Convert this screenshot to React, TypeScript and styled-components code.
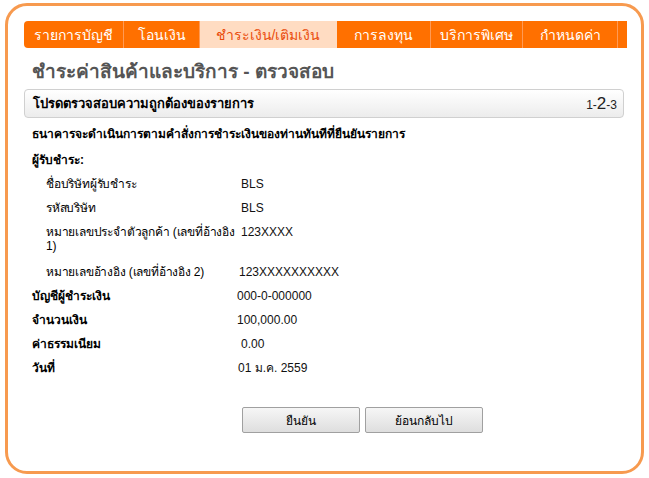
import { Fragment } from "react";
import styled, { createGlobalStyle } from "styled-components";

const GlobalStyle = createGlobalStyle`
  html, body {
    margin: 0;
    padding: 0;
    background: #ffffff;
    font-family: Tahoma, "Liberation Sans", "Noto Sans", sans-serif;
    color: #000;
  }
`;

const Page = styled.div`
  width: 649px;
  height: 478px;
  padding: 3px 5px 4px 5px;
  box-sizing: border-box;
`;

const Frame = styled.div`
  height: 100%;
  box-sizing: border-box;
  border: 3px solid #f79a4f;
  border-radius: 22px;
  padding: 15px 13px 0 16px;
  display: flex;
  flex-direction: column;
`;

const Nav = styled.div`
  display: flex;
  height: 27px;
  background: #ff7000;
  border-radius: 4px 0 0 4px;
  width: 603px;
`;

const Tab = styled.div<{ $w: number; $active?: boolean }>`
  width: ${(p) => p.$w}px;
  display: flex;
  align-items: center;
  justify-content: center;
  font-size: 14px;
  color: ${(p) => (p.$active ? "#ea4c0c" : "#ffffff")};
  background: ${(p) => (p.$active ? "#ffdcc2" : "transparent")};
  border-right: 1px solid ${(p) => (p.$active ? "transparent" : "#ff9a55")};
  box-sizing: border-box;
`;

const Title = styled.h1`
  margin: 12px 0 0 8px;
  font-size: 19px;
  font-weight: bold;
  color: #555555;
  line-height: 24px;
`;

const StepBox = styled.div`
  margin-top: 5px;
  width: 600px;
  height: 29px;
  box-sizing: border-box;
  border: 1px solid #d0d0d0;
  border-radius: 4px;
  background: linear-gradient(#ffffff, #ececec);
  display: flex;
  align-items: center;
  justify-content: space-between;
  padding: 0 6px 0 8px;
`;

const StepTitle = styled.span`
  font-size: 13px;
  font-weight: bold;
`;

const Steps = styled.span`
  font-size: 12px;
  color: #222;
  b {
    font-weight: normal;
    font-size: 17px;
  }
`;

const Notice = styled.div`
  margin: 7px 0 0 8px;
  font-size: 12px;
  font-weight: bold;
  line-height: 18px;
`;

const Section = styled.div`
  margin: 8px 0 0 8px;
  font-size: 12px;
  font-weight: bold;
  line-height: 18px;
`;

const Table = styled.div`
  margin-top: 3px;
  display: grid;
  grid-template-columns: 213px 1fr;
  font-size: 12px;
  line-height: 14px;
`;

const Label = styled.div<{ $bold?: boolean; $extra?: number }>`
  padding: 5px 0 ${(p) => 5 + (p.$extra ?? 0)}px ${(p) => (p.$bold ? "8px" : "22px")};
  font-weight: ${(p) => (p.$bold ? "bold" : "normal")};
  letter-spacing: ${(p) => (p.$bold ? "0" : "-0.2px")};
`;

const Value = styled.div<{ $shift?: number }>`
  padding: 5px 0 5px ${(p) => p.$shift ?? 0}px;
  color: #111;
`;

const Buttons = styled.div`
  margin-top: 27px;
  display: flex;
  gap: 5px;
  padding-left: 218px;
`;

const Button = styled.button`
  width: 118px;
  height: 26px;
  border: 1px solid #a0a0a0;
  border-radius: 2px;
  background: linear-gradient(#f6f6f6, #dedede);
  font-family: inherit;
  font-size: 12px;
  color: #000;
`;

const tabs = [
  { t: "รายการบัญชี", w: 100 },
  { t: "โอนเงิน", w: 76 },
  { t: "ชำระเงิน/เติมเงิน", w: 137, active: true },
  { t: "การลงทุน", w: 94 },
  { t: "บริการพิเศษ", w: 92 },
  { t: "กำหนดค่า", w: 95 },
];

const payee = [
  { l: "ชื่อบริษัทผู้รับชำระ", v: "BLS", s: 4, e: 0 },
  { l: "รหัสบริษัท", v: "BLS", s: 4, e: 0 },
  { l: "หมายเลขประจำตัวลูกค้า (เลขที่อ้างอิง 1)", v: "123XXXX", s: 4, e: 2 },
  { l: "หมายเลขอ้างอิง (เลขที่อ้างอิง 2)", v: "123XXXXXXXXXX", s: 2, e: 0 },
];

const summary = [
  { l: "บัญชีผู้ชำระเงิน", v: "000-0-000000", s: 0 },
  { l: "จำนวนเงิน", v: "100,000.00", s: 0 },
  { l: "ค่าธรรมเนียม", v: "0.00", s: 4 },
  { l: "วันที่", v: "01 ม.ค. 2559", s: 1 },
];

export default function App() {
  return (
    <Page>
      <GlobalStyle />
      <Frame>
        <Nav>
          {tabs.map((x) => (
            <Tab key={x.t} $w={x.w} $active={x.active}>
              {x.t}
            </Tab>
          ))}
        </Nav>
        <Title>ชำระค่าสินค้าและบริการ - ตรวจสอบ</Title>
        <StepBox>
          <StepTitle>โปรดตรวจสอบความถูกต้องของรายการ</StepTitle>
          <Steps>
            1-<b>2</b>-3
          </Steps>
        </StepBox>
        <Notice>ธนาคารจะดำเนินการตามคำสั่งการชำระเงินของท่านทันทีที่ยืนยันรายการ</Notice>
        <Section>ผู้รับชำระ:</Section>
        <Table>
          {payee.map((r) => (
            <Fragment key={r.l}>
              <Label $extra={r.e}>{r.l}</Label>
              <Value $shift={r.s}>{r.v}</Value>
            </Fragment>
          ))}
          {summary.map((r) => (
            <Fragment key={r.l}>
              <Label $bold>{r.l}</Label>
              <Value $shift={r.s}>{r.v}</Value>
            </Fragment>
          ))}
        </Table>
        <Buttons>
          <Button>ยืนยัน</Button>
          <Button>ย้อนกลับไป</Button>
        </Buttons>
      </Frame>
    </Page>
  );
}
